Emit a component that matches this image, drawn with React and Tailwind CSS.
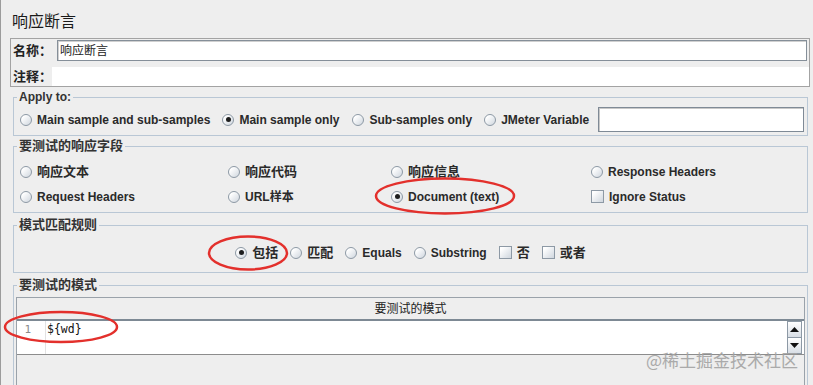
import React from "react";

function Radio({ checked }) {
  return (
    <span className="flex h-[12px] w-[12px] shrink-0 items-center justify-center rounded-full border border-[#8d99a5] bg-[linear-gradient(135deg,#ffffff_20%,#cfd6de)]">
      {checked && <span className="h-[5px] w-[5px] rounded-full bg-[#1e1e1e]" />}
    </span>
  );
}

function Check() {
  return (
    <span className="block h-[13px] w-[13px] shrink-0 border border-[#8d99a5] bg-[linear-gradient(135deg,#ffffff_15%,#cfd6de)]" />
  );
}

function Opt({ checked, box, cjk, children }) {
  return (
    <div className="flex items-center gap-[5px]">
      {box ? <Check /> : <Radio checked={checked} />}
      <span className={(cjk ? "text-[13px]" : "text-[12px]") + " font-bold leading-[16px] whitespace-nowrap text-[#2a2a2a]"}>
        {children}
      </span>
    </div>
  );
}

function Legend({ cjk, children }) {
  return (
    <legend className={(cjk ? "text-[13px]" : "text-[12px]") + " ml-[3px] px-[2px] font-bold leading-[14px] text-[#333]"}>
      {children}
    </legend>
  );
}

export default function App() {
  return (
    <div className="relative flex h-[385px] w-[813px] flex-col overflow-hidden bg-[#eeeeee] font-['Liberation_Sans','Noto_Sans_CJK_SC',sans-serif] text-[#222] shadow-[inset_1px_0_0_#9c9c9c]">
      <div className="h-[38px] shrink-0 pl-[12px] pt-[12px] text-[16px] leading-[20px] text-[#1a1a1a]">响应断言</div>

      <div className="ml-[10px] flex h-[49px] w-[800px] shrink-0 flex-col border border-[#a3a3a3]">
        <div className="flex h-[23px] items-center">
          <div className="w-[46px] pl-[2px] text-[13px] font-bold leading-[16px]">名称：</div>
          <div className="mr-[2px] flex h-[21px] flex-1 items-center border border-[#858f99] bg-white pl-[2px] text-[12px] leading-[16px] shadow-[inset_1px_1px_0_#d0d0d0]">
            响应断言
          </div>
        </div>
        <div className="flex flex-1 items-end">
          <div className="flex h-[19px] w-[41px] items-center pl-[2px] text-[13px] font-bold leading-[16px]">注释：</div>
          <div className="h-[19px] flex-1 bg-white" />
        </div>
      </div>

      <fieldset className="ml-[13px] mt-[3px] w-[795px] shrink-0 border border-[#b9c7d5] px-0 pb-[3px] pt-[3px]">
        <Legend>Apply to:</Legend>
        <div className="flex h-[25px] items-center pl-[6px]">
          <Opt>Main sample and sub-samples</Opt>
          <div className="ml-[12px]"><Opt checked>Main sample only</Opt></div>
          <div className="ml-[13px]"><Opt>Sub-samples only</Opt></div>
          <div className="ml-[12px]"><Opt>JMeter Variable</Opt></div>
          <div className="ml-[9px] mr-[3px] h-[25px] flex-1 border border-[#7f8a96] bg-white shadow-[inset_1px_1px_0_#c8c8c8]" />
        </div>
      </fieldset>

      <fieldset className="ml-[13px] mt-[3px] w-[795px] shrink-0 border border-[#b9c7d5] px-0 pb-[3px] pt-[6px]">
        <Legend cjk>要测试的响应字段</Legend>
        <div className="grid grid-cols-[208px_163px_200px_1fr] pl-[6px]">
          <div className="flex h-[25px] items-center"><Opt cjk>响应文本</Opt></div>
          <div className="flex h-[25px] items-center"><Opt cjk>响应代码</Opt></div>
          <div className="flex h-[25px] items-center"><Opt cjk>响应信息</Opt></div>
          <div className="flex h-[25px] items-center"><Opt>Response Headers</Opt></div>
          <div className="flex h-[25px] items-center"><Opt>Request Headers</Opt></div>
          <div className="flex h-[25px] items-center"><Opt>URL样本</Opt></div>
          <div className="flex h-[25px] items-center"><Opt checked>Document (text)</Opt></div>
          <div className="flex h-[25px] items-center"><Opt box>Ignore Status</Opt></div>
        </div>
      </fieldset>

      <fieldset className="ml-[13px] mt-[5px] w-[795px] shrink-0 border border-[#b9c7d5] px-0 pb-[7px] pt-[8px]">
        <Legend cjk>模式匹配规则</Legend>
        <div className="flex h-[25px] items-center justify-center gap-[12px]">
          <Opt checked cjk>包括</Opt>
          <Opt cjk>匹配</Opt>
          <Opt>Equals</Opt>
          <Opt>Substring</Opt>
          <Opt box cjk>否</Opt>
          <Opt box cjk>或者</Opt>
        </div>
      </fieldset>

      <fieldset className="ml-[13px] mt-[5px] flex h-[140px] w-[795px] shrink-0 flex-col border border-[#b9c7d5] px-0 pt-[5px]">
        <Legend cjk>要测试的模式</Legend>
        <div className="ml-[2px] mr-[2px] flex h-[120px] flex-col border-l border-r border-t border-[#9aa2aa]">
          <div className="flex h-[23px] shrink-0 items-center justify-center border-b-2 border-[#7d8994] bg-[#eeeeee] text-[12px] leading-[16px] text-[#222]">
            要测试的模式
          </div>
          <div className="flex h-[34px] shrink-0 border-b border-[#8c8c8c] bg-white">
            <div className="w-[29px] border-r border-[#e2e2e2] pr-[14px] pt-[1px] text-right font-['DejaVu_Sans_Mono',monospace] text-[11px] leading-[15px] text-[#8a8a8a]">
              1
            </div>
            <div className="flex-1 pl-[1px] pt-[1px] font-['DejaVu_Sans_Mono',monospace] text-[11.5px] leading-[15px] text-[#111]">
              {"${wd}"}
            </div>
            <div className="mr-[2px] flex w-[15px] flex-col">
              <div className="flex flex-1 items-center justify-center border border-[#8d99a5] bg-[linear-gradient(180deg,#ffffff,#d8dee5)]">
                <svg width="9" height="5" viewBox="0 0 9 5"><path d="M0 5 L4.5 0 L9 5 Z" fill="#111" /></svg>
              </div>
              <div className="flex flex-1 items-center justify-center border border-t-0 border-[#8d99a5] bg-[linear-gradient(180deg,#ffffff,#d8dee5)]">
                <svg width="9" height="5" viewBox="0 0 9 5"><path d="M0 0 L9 0 L4.5 5 Z" fill="#111" /></svg>
              </div>
            </div>
          </div>
          <div className="flex-1" />
        </div>
      </fieldset>

      <div className="pointer-events-none absolute left-[646px] top-[349px] whitespace-nowrap font-['Noto_Sans_CJK_SC',sans-serif] text-[17px] leading-[22px] text-[#a3a3a3] opacity-90">
        @稀土掘金技术社区
      </div>

      <svg className="pointer-events-none absolute left-0 top-0" width="813" height="385" viewBox="0 0 813 385">
        <ellipse cx="445" cy="196" rx="69" ry="17.5" fill="none" stroke="#e3302c" strokeWidth="2.5" />
        <ellipse cx="248" cy="253" rx="39" ry="16.5" fill="none" stroke="#e3302c" strokeWidth="2.5" />
        <ellipse cx="61" cy="327" rx="56" ry="15" fill="none" stroke="#e3302c" strokeWidth="2.5" />
      </svg>
    </div>
  );
}
